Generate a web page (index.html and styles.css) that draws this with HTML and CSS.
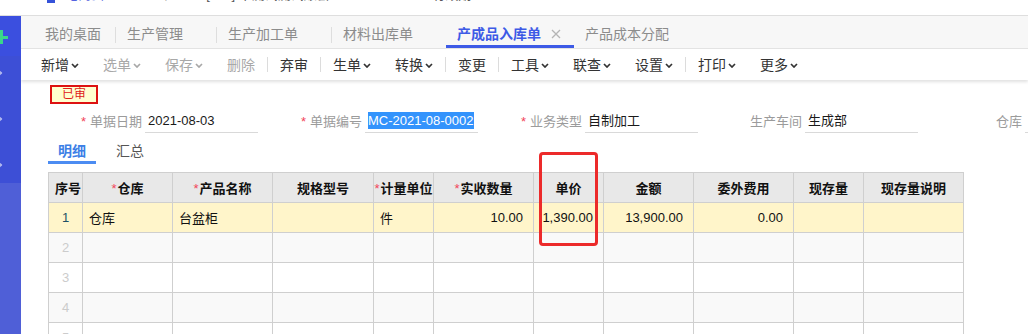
FILE: index.html
```html
<!DOCTYPE html>
<html lang="zh-CN">

<head>
	<meta charset="UTF-8" />
	<title>产成品入库单</title>
	<link rel="stylesheet" href="styles.css">
</head>

<body>
	<div class="topstrip">
		<div class="topstrip-text">
			<span class="ts-logo"></span>
			<span class="ts-blue">电商云</span>
			<span class="ts-gray">▬▬ 生产 ▾</span>
			<span class="ts-dark">[000] 中测试测试账套</span>
			<span class="ts-dark">2021-08-03</span>
			<span class="ts-dark">有效期2031-07-31</span>
		</div>
	</div>

	<div class="app">
		<aside class="sidebar">
			<div class="sb-top"><span class="sb-plus"></span></div>
			<div class="sb-mid">
				<span class="sb-arrow"></span>
				<span class="sb-arrow"></span>
				<span class="sb-arrow"></span>
			</div>
			<div class="sb-bottom"></div>
		</aside>

		<main class="workspace">
			<nav class="tabbar">
				<div class="tab first">我的桌面</div>
				<span class="tab-sep"></span>
				<div class="tab">生产管理<span class="close hidden"></span></div>
				<span class="tab-sep"></span>
				<div class="tab">生产加工单<span class="close hidden"></span></div>
				<span class="tab-sep"></span>
				<div class="tab">材料出库单<span class="close hidden"></span></div>
				<div class="tab active">产成品入库单
					<span class="close">
						<svg width="10" height="10" viewBox="0 0 10 10"><path d="M1 1L9 9M9 1L1 9" stroke="#b5b5b5" stroke-width="1.3" fill="none"/></svg>
					</span>
				</div>
				<div class="tab">产品成本分配</div>
			</nav>

			<div class="toolbar">
				<div class="tool">新增<svg class="caret" viewBox="0 0 8 5"><path d="M1 1l3 3 3-3" /></svg></div>
				<div class="tool off">选单<svg class="caret" viewBox="0 0 8 5"><path d="M1 1l3 3 3-3" /></svg></div>
				<div class="tool off">保存<svg class="caret" viewBox="0 0 8 5"><path d="M1 1l3 3 3-3" /></svg></div>
				<div class="tool off">删除</div>
				<span class="tool-sep"></span>
				<div class="tool">弃审</div>
				<span class="tool-sep"></span>
				<div class="tool">生单<svg class="caret" viewBox="0 0 8 5"><path d="M1 1l3 3 3-3" /></svg></div>
				<div class="tool">转换<svg class="caret" viewBox="0 0 8 5"><path d="M1 1l3 3 3-3" /></svg></div>
				<span class="tool-sep"></span>
				<div class="tool">变更</div>
				<span class="tool-sep"></span>
				<div class="tool">工具<svg class="caret" viewBox="0 0 8 5"><path d="M1 1l3 3 3-3" /></svg></div>
				<div class="tool">联查<svg class="caret" viewBox="0 0 8 5"><path d="M1 1l3 3 3-3" /></svg></div>
				<div class="tool">设置<svg class="caret" viewBox="0 0 8 5"><path d="M1 1l3 3 3-3" /></svg></div>
				<span class="tool-sep"></span>
				<div class="tool">打印<svg class="caret" viewBox="0 0 8 5"><path d="M1 1l3 3 3-3" /></svg></div>
				<div class="tool">更多<svg class="caret" viewBox="0 0 8 5"><path d="M1 1l3 3 3-3" /></svg></div>
			</div>

			<section class="content">
				<div class="stamp">已审</div>

				<div class="form-row">
					<div class="field">
						<label><i>*</i>单据日期</label>
						<div class="input">2021-08-03</div>
					</div>
					<div class="field">
						<label><i>*</i>单据编号</label>
						<div class="input"><span class="selected">MC-2021-08-0002</span></div>
					</div>
					<div class="field">
						<label><i>*</i>业务类型</label>
						<div class="input">自制加工</div>
					</div>
					<div class="field">
						<label>生产车间</label>
						<div class="input">生成部</div>
					</div>
					<div class="field">
						<label>仓库</label>
						<div class="input"></div>
					</div>
				</div>

				<div class="subtabs">
					<div class="subtab active">明细</div>
					<div class="subtab">汇总</div>
				</div>

				<table class="grid">
					<colgroup>
						<col style="width: 34px"><col style="width: 90px"><col style="width: 100px"><col style="width: 101px">
						<col style="width: 60px"><col style="width: 100px"><col style="width: 70px"><col style="width: 90px">
						<col style="width: 100px"><col style="width: 70px"><col style="width: 100px">
					</colgroup>
					<thead>
						<tr>
							<th>序号</th>
							<th><i>*</i>仓库</th>
							<th><i>*</i>产品名称</th>
							<th>规格型号</th>
							<th class="tight"><i>*</i>计量单位</th>
							<th><i>*</i>实收数量</th>
							<th>单价</th>
							<th>金额</th>
							<th>委外费用</th>
							<th>现存量</th>
							<th>现存量说明</th>
						</tr>
					</thead>
					<tbody>
						<tr class="current">
							<td class="no">1</td>
							<td>仓库</td>
							<td>台盆柜</td>
							<td></td>
							<td>件</td>
							<td class="num">10.00</td>
							<td class="num">1,390.00</td>
							<td class="num">13,900.00</td>
							<td class="num">0.00</td>
							<td></td>
							<td></td>
						</tr>
						<tr><td class="no">2</td><td></td><td></td><td></td><td></td><td></td><td></td><td></td><td></td><td></td><td></td></tr>
						<tr><td class="no">3</td><td></td><td></td><td></td><td></td><td></td><td></td><td></td><td></td><td></td><td></td></tr>
						<tr><td class="no">4</td><td></td><td></td><td></td><td></td><td></td><td></td><td></td><td></td><td></td><td></td></tr>
						<tr><td class="no">5</td><td></td><td></td><td></td><td></td><td></td><td></td><td></td><td></td><td></td><td></td></tr>
					</tbody>
				</table>
			</section>
		</main>
	</div>

	<div class="mark-box"></div>
</body>

</html>
```

FILE: styles.css
```css
body, html {
	margin: 0;
	height: 100%;
	overflow: hidden;
	background-color: #fff;
	font-family: 'Liberation Sans', 'Noto Sans CJK SC', sans-serif;
	color: #333;
}
i {
	font-style: normal;
}

/* cut-off browser title strip */
.topstrip {
	height: 15px;
	overflow: hidden;
	border-bottom: 1px solid #dedede;
}
.topstrip-text {
	display: flex;
	align-items: flex-end;
	gap: 18px;
	margin-top: -13px;
	padding-left: 47px;
	font-size: 13px;
	line-height: 16px;
	white-space: nowrap;
}
.ts-logo {
	width: 8px;
	height: 15px;
	margin-right: -8px;
	background-color: #3552d9;
}
.ts-blue { color: #5563e0; }
.ts-gray { color: #888; }
.ts-dark { color: #555; }

.app {
	display: flex;
	height: calc(100% - 16px);
}

/* left nav rail */
.sidebar {
	width: 21px;
	flex-shrink: 0;
	display: flex;
	flex-direction: column;
	background-color: #4f5fd7;
}
.sb-top {
	height: 40px;
	background-color: #3b4fdf;
	position: relative;
	overflow: hidden;
}
.sb-plus {
	position: absolute;
	left: -6px;
	top: 14px;
	width: 14px;
	height: 14px;
	background:
		linear-gradient(#3ad68a, #3ad68a) center / 14px 3px no-repeat,
		linear-gradient(#3ad68a, #3ad68a) center / 3px 14px no-repeat;
}
.sb-mid {
	height: 127px;
	background-color: #3d4fd6;
	display: flex;
	flex-direction: column;
	padding-top: 14px;
	gap: 40px;
	box-sizing: border-box;
	overflow: hidden;
}
.sb-arrow {
	width: 4px;
	height: 4px;
	margin-left: -5px;
	border-top: 2px solid #aeb6ee;
	border-right: 2px solid #aeb6ee;
	transform: rotate(45deg);
}
.sb-bottom {
	flex: 1;
}

.workspace {
	flex: 1;
	min-width: 0;
	overflow: hidden;
}

/* page tabs */
.tabbar {
	height: 33px;
	display: flex;
	align-items: flex-start;
	background-color: #f7f7f7;
	border-bottom: 1px solid #e4e4e4;
	box-sizing: border-box;
	padding-left: 13px;
	white-space: nowrap;
}
.tab {
	display: flex;
	align-items: center;
	height: 32px;
	padding: 6px 13px 0 11px;
	box-sizing: border-box;
	font-size: 14px;
	line-height: 22px;
	color: #8c8c8c;
	border-bottom: 3px solid transparent;
}
.tab.first {
	padding-right: 14px;
}
.tab.active {
	color: #3d5ae6;
	font-weight: bold;
	border-bottom-color: #3d5ae6;
}
.close {
	width: 20px;
	display: flex;
	justify-content: flex-end;
}
.close.hidden {
	visibility: hidden;
}
.tab-sep {
	width: 1px;
	height: 16px;
	margin-top: 11px;
	background-color: #dedede;
}

/* action toolbar */
.toolbar {
	height: 31px;
	display: flex;
	align-items: center;
	padding-left: 8px;
	background-color: #fff;
	box-shadow: 0 2px 3px rgba(0, 0, 0, 0.12);
	position: relative;
	z-index: 1;
	white-space: nowrap;
}
.tool {
	display: flex;
	align-items: center;
	padding: 0 12px;
	font-size: 14px;
	line-height: 20px;
	color: #333;
}
.tool.off {
	color: #a8a8a8;
}
.caret {
	width: 8px;
	height: 5px;
	margin-left: 2px;
	margin-top: 1px;
}
.caret path {
	fill: none;
	stroke: currentColor;
	stroke-width: 1.7;
}
.tool-sep {
	width: 1px;
	height: 15px;
	background-color: #dcdcdc;
}

/* bill body */
.content {
	padding: 5px 0 0 27px;
}
.stamp {
	width: 48px;
	height: 19px;
	margin-left: 2px;
	box-sizing: border-box;
	border: 2px solid #dd1111;
	background-color: #ffffcf;
	color: #e02020;
	font-size: 12px;
	line-height: 15px;
	text-align: center;
}

.form-row {
	display: flex;
	margin: 6px 0 0 30px;
	white-space: nowrap;
}
.field {
	display: flex;
	flex-shrink: 0;
	width: 220px;
	align-items: flex-end;
}
.field label {
	width: 64px;
	padding-right: 3px;
	text-align: right;
	font-size: 13px;
	line-height: 22px;
	color: #9b9b9b;
}
.field label i {
	color: #f2445a;
	margin-right: 4px;
}
.input {
	width: 113px;
	height: 23px;
	box-sizing: border-box;
	padding-left: 3px;
	border-bottom: 1px solid #d9d9d9;
	font-size: 13px;
	line-height: 22px;
	color: #1a1a1a;
}
.selected {
	background-color: #3393fc;
	color: #fff;
	padding: 1px 0;
}

.subtabs {
	display: flex;
	gap: 10px;
}
.subtab {
	width: 48px;
	padding-top: 8px;
	font-size: 14px;
	line-height: 20px;
	text-align: center;
	color: #555;
	border-bottom: 3px solid transparent;
}
.subtab.active {
	color: #3c7fe6;
	font-weight: bold;
	border-bottom-color: #4c8cf2;
}

/* detail grid */
.grid {
	margin-top: 8px;
	border-collapse: collapse;
	table-layout: fixed;
	width: 915px;
	font-size: 13px;
}
.grid th, .grid td {
	height: 29px;
	padding: 0 6px;
	border: 1px solid #cfcfcf;
	white-space: nowrap;
	overflow: hidden;
}
.grid th {
	background-color: #e8e8e8;
	color: #111;
	font-weight: bold;
	text-align: center;
}
.grid th.tight {
	padding: 0;
}
.grid th i {
	color: #f2445a;
	font-weight: normal;
	margin-right: 1px;
}
.grid tbody tr:nth-child(even) td {
	background-color: #f9f9f9;
}
.grid tbody tr.current td {
	background-color: #fff5ca;
	color: #111;
}
.grid td.no {
	text-align: center;
	padding: 0;
	color: #ccc;
}
.grid tr.current td.no {
	color: #1d4f66;
}
.grid td.num {
	text-align: right;
	padding-right: 10px;
	color: #1c1c44;
}

/* red annotation drawn on the screenshot */
.mark-box {
	position: absolute;
	left: 539px;
	top: 152px;
	width: 59px;
	height: 94px;
	box-sizing: border-box;
	border: 3px solid #ec2a2a;
	border-radius: 4px;
}
```
